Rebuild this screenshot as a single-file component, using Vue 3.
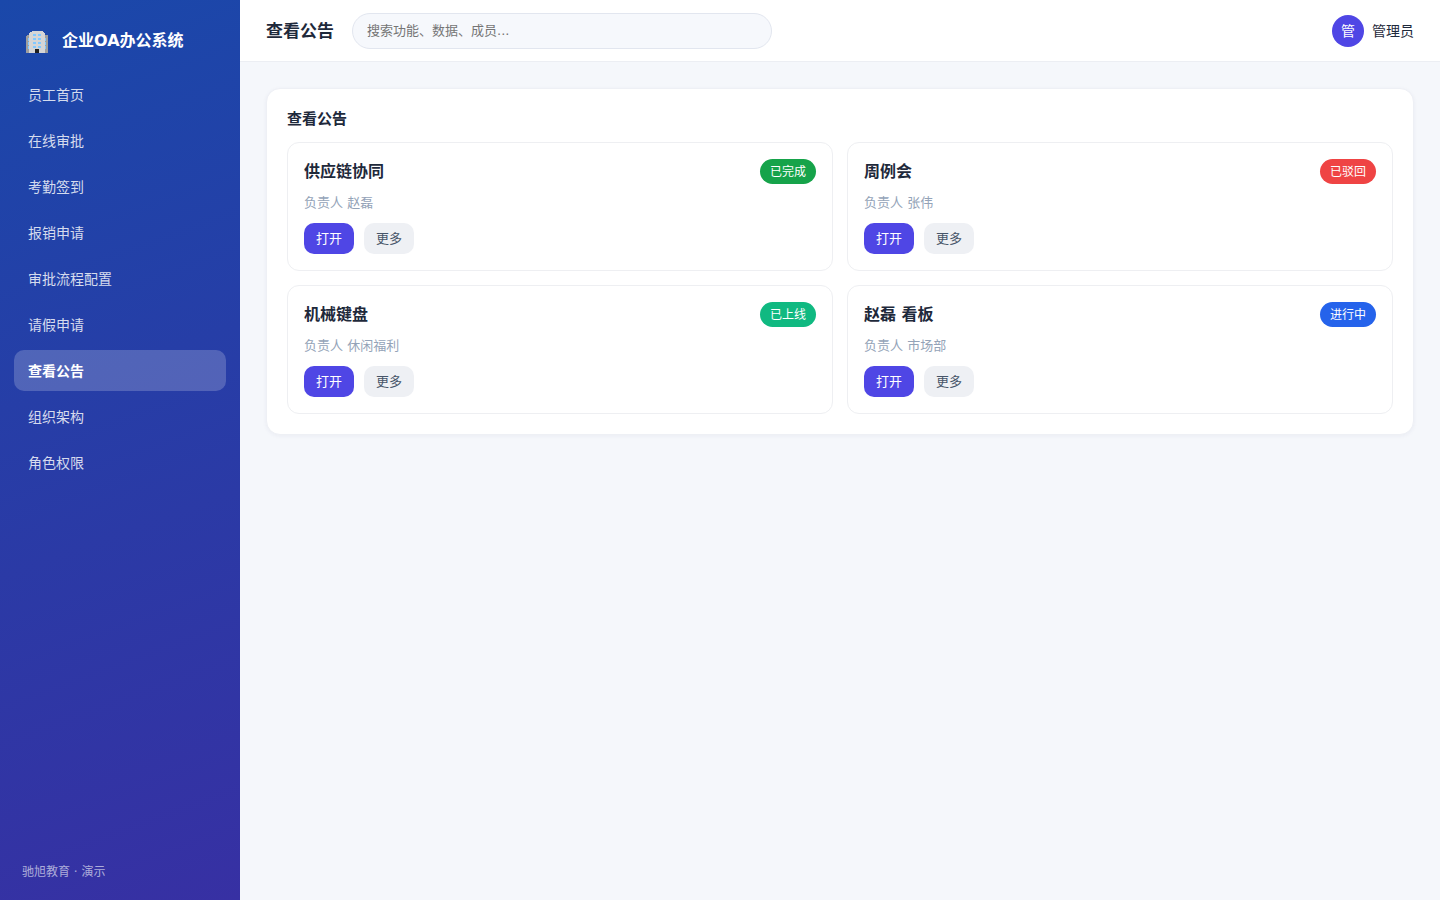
<script setup>
import { ref } from 'vue'

const nav = ['员工首页', '在线审批', '考勤签到', '报销申请', '审批流程配置', '请假申请', '查看公告', '组织架构', '角色权限']
const active = ref('查看公告')
const keyword = ref('')

const notices = [
  { title: '供应链协同', owner: '赵磊', status: '已完成', tone: 'done' },
  { title: '周例会', owner: '张伟', status: '已驳回', tone: 'rejected' },
  { title: '机械键盘', owner: '休闲福利', status: '已上线', tone: 'online' },
  { title: '赵磊 看板', owner: '市场部', status: '进行中', tone: 'running' }
]
</script>

<template>
  <div class="layout">
    <aside class="sidebar">
      <div class="brand">
        <svg class="brand-icon" viewBox="0 0 22 22" shape-rendering="crispEdges" aria-hidden="true">
          <path d="M0 5l1-1h20l1 1v17H0z" fill="#9e9e9e" />
          <path d="M2 7h1v3H2zM2 11h1v3H2zM2 15h1v3H2zM19 7h1v3h-1zM19 11h1v3h-1zM19 15h1v3h-1z" fill="#82c8ff" />
          <path d="M3 2h1V1h2V0h11v1h1v1h1v20H3z" fill="#d5d5d6" />
          <path d="M7 3h3v2H7zM12 3h3v2h-3zM7 7h3v2H7zM12 7h3v2h-3zM7 11h3v2H7zM12 11h3v2h-3zM7 15h3v2H7zM12 15h3v2h-3z" fill="#82c8ff" />
          <path d="M9 18h4v4H9z" fill="#202020" />
        </svg>
        <span>企业OA办公系统</span>
      </div>
      <nav class="menu">
        <a
          v-for="item in nav"
          :key="item"
          href="#"
          class="menu-item"
          :class="{ active: item === active }"
          @click.prevent="active = item"
        >{{ item }}</a>
      </nav>
      <div class="copyright">驰旭教育 · 演示</div>
    </aside>

    <div class="main">
      <header class="topbar">
        <h1>查看公告</h1>
        <input v-model="keyword" class="search" type="text" placeholder="搜索功能、数据、成员..." aria-label="搜索" />
        <div class="user">
          <span class="avatar">管</span>
          <span>管理员</span>
        </div>
      </header>

      <main class="content">
        <section class="panel">
          <h2>查看公告</h2>
          <div class="grid">
            <article v-for="n in notices" :key="n.title" class="card">
              <div class="card-head">
                <h3>{{ n.title }}</h3>
                <span class="badge" :class="n.tone">{{ n.status }}</span>
              </div>
              <p>负责人 {{ n.owner }}</p>
              <div class="actions">
                <button type="button" class="btn primary">打开</button>
                <button type="button" class="btn">更多</button>
              </div>
            </article>
          </div>
        </section>
      </main>
    </div>
  </div>
</template>

<style>
body {
  margin: 0;
  background: #f5f7fb;
}
</style>

<style scoped>
.layout,
.layout * {
  box-sizing: border-box;
}

.layout {
  display: flex;
  min-height: 100vh;
  font-family: "DejaVu Sans", "Noto Sans CJK SC", sans-serif;
  font-size: 14px;
  line-height: 20px;
  color: #1e293b;
}

.sidebar {
  display: flex;
  flex-direction: column;
  flex: 0 0 240px;
  padding: 18px 14px;
  background: linear-gradient(160deg, #1a48aa, #3730a3);
  color: #fff;
}

.brand {
  display: flex;
  align-items: center;
  gap: 14px;
  padding: 11px 12px 9px;
  margin-bottom: 12px;
  font-size: 16px;
  line-height: 24px;
  font-weight: 700;
}

.brand-icon {
  flex: none;
  width: 22px;
  height: 22px;
  margin-top: 2px;
}

.menu {
  display: flex;
  flex-direction: column;
  gap: 5px;
  flex: 1;
}

.menu-item {
  padding: 11px 14px 9px;
  border-radius: 10px;
  line-height: 21px;
  color: rgba(255, 255, 255, 0.82);
  text-decoration: none;
}

.menu-item.active {
  background: rgba(255, 255, 255, 0.2);
  color: #fff;
  font-weight: 700;
}

.copyright {
  padding: 0 8px;
  font-size: 12px;
  color: rgba(255, 255, 255, 0.6);
}

.main {
  flex: 1;
  min-width: 0;
}

.topbar {
  display: flex;
  align-items: center;
  gap: 18px;
  height: 62px;
  padding: 0 26px;
  background: #fff;
  border-bottom: 1px solid #eceef3;
}

h1,
h2,
h3,
p {
  margin: 0;
}

h1 {
  font-size: 17px;
  line-height: 24px;
}

.search {
  flex: 0 1 420px;
  min-width: 0;
  height: 36px;
  padding: 0 14px;
  border: 1px solid #e2e6ef;
  border-radius: 18px;
  outline: none;
  background: #f6f8fc;
  font: inherit;
  font-size: 13px;
  color: inherit;
}

.search::placeholder {
  color: #757575;
}

.user {
  display: flex;
  align-items: center;
  gap: 8px;
  margin-left: auto;
}

.avatar {
  width: 32px;
  height: 32px;
  border-radius: 50%;
  background: #4f46e5;
  color: #fff;
  line-height: 32px;
  text-align: center;
}

.content {
  padding: 26px;
}

.panel {
  padding: 20px;
  border: 1px solid #eef0f5;
  border-radius: 14px;
  background: #fff;
  box-shadow: 0 1px 4px rgba(30, 41, 90, 0.05);
}

h2 {
  margin-bottom: 13px;
  font-size: 15px;
  line-height: 20px;
}

.grid {
  display: grid;
  grid-template-columns: repeat(2, minmax(0, 1fr));
  gap: 14px;
}

.card {
  padding: 16px;
  border: 1px solid #eeeff2;
  border-radius: 12px;
}

.card-head {
  display: flex;
  align-items: center;
  justify-content: space-between;
  margin-bottom: 9px;
}

h3 {
  font-size: 16px;
  line-height: 25px;
}

.badge {
  padding: 5px 10px 3px;
  border-radius: 13px;
  color: #fff;
  font-size: 12px;
  line-height: 17px;
}

.done { background: #16a34a; }
.rejected { background: #ef4444; }
.online { background: #10b981; }
.running { background: #2563eb; }

.card p {
  margin-bottom: 10px;
  font-size: 13px;
  color: #94a3b8;
}

.actions {
  display: flex;
  gap: 10px;
}

.btn {
  padding: 6px 12px;
  border: 0;
  border-radius: 10px;
  background: #eef0f4;
  color: #475569;
  font: inherit;
  font-size: 13px;
  line-height: 19px;
  cursor: pointer;
}

.btn.primary {
  background: #4f46e5;
  color: #fff;
}
</style>
